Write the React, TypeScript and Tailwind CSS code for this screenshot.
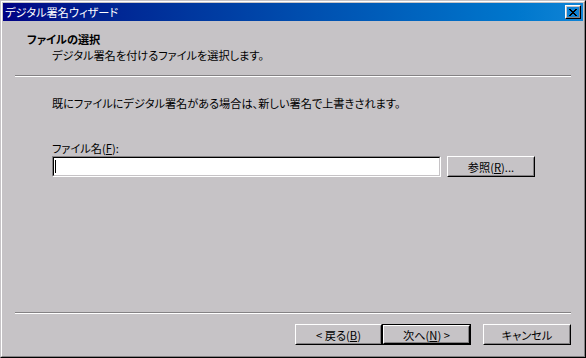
const FONT = "font-['MS_UI_Gothic','Noto_Sans_CJK_JP',sans-serif] [font-feature-settings:'palt']";

function Raised({
  children,
  className = '',
  isDefault = false,
}: {
  children: React.ReactNode;
  className?: string;
  isDefault?: boolean;
}) {
  const inner = (
    <div className="h-full w-full border border-t-white border-l-white border-r-black border-b-black">
      <div className="flex h-full w-full items-center justify-center border border-t-[#c6c3c6] border-l-[#c6c3c6] border-r-[#848284] border-b-[#848284]">
        {children}
      </div>
    </div>
  );
  if (isDefault) {
    return <div className={`border border-black ${className}`}>{inner}</div>;
  }
  return <div className={className}>{inner}</div>;
}

function U({ c }: { c: string }) {
  return <span className="underline underline-offset-[1px]">{c}</span>;
}

export default function App() {
  return (
    <div className={`h-[358px] w-[586px] bg-[#c6c3c6] text-[11.2px] leading-[14px] text-black ${FONT}`}>
      {/* window frame */}
      <div className="h-full w-full border border-t-[#c6c3c6] border-l-[#c6c3c6] border-r-black border-b-black">
        <div className="flex h-full w-full flex-col border border-t-white border-l-white border-r-[#848284] border-b-[#848284] p-px">
          {/* title bar */}
          <div className="flex h-[18px] shrink-0 items-center justify-between bg-gradient-to-r from-[#000084] to-[#1084d6] pl-[2px] pr-[2px]">
            <span className="text-white">デジタル署名ウィザード</span>
            <Raised className="h-[14px] w-[16px]">
              <svg width="8" height="7" viewBox="0 0 8 7">
                <path d="M0 0h2v1h1v1h2V1h1V0h2v1H7v1H6v1H5v1h1v1h1v1h1v1H6V6H5V5H3v1H2v1H0V6h1V5h1V4h1V3H2V2H1V1H0z" fill="black" />
              </svg>
            </Raised>
          </div>

          {/* header */}
          <div className="pl-[24px] pt-[11px]">
            <div className="font-bold">ファイルの選択</div>
            <div className="mt-[2px] pl-[25px]">デジタル署名を付けるファイルを選択します。</div>
          </div>

          <div className="mx-[12px] mt-[13px] border-t border-b border-t-[#848284] border-b-white" />

          {/* body */}
          <div className="pl-[49px] pr-[48px]">
            <p className="mt-[19px]">既にファイルにデジタル署名がある場合は、新しい署名で上書きされます。</p>
            <div className="mt-[31px]">
              ファイル名(<U c="F" />):
            </div>
            <div className="mt-px flex items-start gap-[6px]">
              <div className="h-[21px] w-[389px] border border-t-[#848284] border-l-[#848284] border-r-white border-b-white">
                <div className="flex h-full w-full items-center border border-t-black border-l-black border-r-[#c6c3c6] border-b-[#c6c3c6] bg-white pl-px">
                  <div className="h-[13px] w-px bg-black" />
                </div>
              </div>
              <Raised className="h-[21px] w-[88px]">
                <span>
                  参照(<U c="R" />)...
                </span>
              </Raised>
            </div>
          </div>

          <div className="flex-1" />

          <div className="mx-[12px] border-t border-b border-t-[#848284] border-b-white" />

          {/* buttons */}
          <div className="mt-[10px] mb-[10px] flex justify-end pr-[12px]">
            <Raised className="h-[21px] w-[87px]">
              <span>
                &lt;&nbsp;戻る(<U c="B" />)
              </span>
            </Raised>
            <Raised isDefault className="h-[21px] w-[89px]">
              <span>
                次へ(<U c="N" />)&nbsp;&gt;
              </span>
            </Raised>
            <Raised className="ml-[12px] h-[21px] w-[88px]">
              <span>キャンセル</span>
            </Raised>
          </div>
        </div>
      </div>
    </div>
  );
}
